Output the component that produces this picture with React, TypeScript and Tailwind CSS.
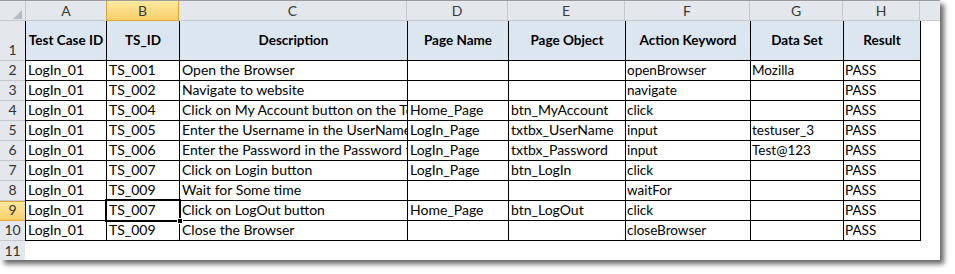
import React from 'react';

// column widths include the right border line
const cols = [
  { key: 'A', w: 'w-[82px]', hw: 'w-[81px]' },
  { key: 'B', w: 'w-[73px]', hw: 'w-[73px]' },
  { key: 'C', w: 'w-[228px]', hw: 'w-[228px]' },
  { key: 'D', w: 'w-[101px]', hw: 'w-[101px]' },
  { key: 'E', w: 'w-[117px]', hw: 'w-[117px]' },
  { key: 'F', w: 'w-[125px]', hw: 'w-[125px]' },
  { key: 'G', w: 'w-[93px]', hw: 'w-[93px]' },
  { key: 'H', w: 'w-[77px]', hw: 'w-[77px]' },
];

const headers = ['Test Case ID', 'TS_ID', 'Description', 'Page Name', 'Page Object', 'Action Keyword', 'Data Set', 'Result'];

const rows: string[][] = [
  ['LogIn_01', 'TS_001', 'Open the Browser', '', '', 'openBrowser', 'Mozilla', 'PASS'],
  ['LogIn_01', 'TS_002', 'Navigate to website', '', '', 'navigate', '', 'PASS'],
  ['LogIn_01', 'TS_004', 'Click on My Account button on the Top of the Homepage', 'Home_Page', 'btn_MyAccount', 'click', '', 'PASS'],
  ['LogIn_01', 'TS_005', 'Enter the Username in the UserName field', 'LogIn_Page', 'txtbx_UserName', 'input', 'testuser_3', 'PASS'],
  ['LogIn_01', 'TS_006', 'Enter the Password in the Password field', 'LogIn_Page', 'txtbx_Password', 'input', 'Test@123', 'PASS'],
  ['LogIn_01', 'TS_007', 'Click on Login button', 'LogIn_Page', 'btn_LogIn', 'click', '', 'PASS'],
  ['LogIn_01', 'TS_009', 'Wait for Some time', '', '', 'waitFor', '', 'PASS'],
  ['LogIn_01', 'TS_007', 'Click on LogOut button', 'Home_Page', 'btn_LogOut', 'click', '', 'PASS'],
  ['LogIn_01', 'TS_009', 'Close the Browser', '', '', 'closeBrowser', '', 'PASS'],
];

const font = "font-['Lato','Liberation_Sans',sans-serif]";

const RowHead: React.FC<{ n: number; h: string; selected?: boolean }> = ({ n, h, selected }) => (
  <div
    className={`w-[25px] ${h} shrink-0 flex items-end justify-center pb-[2px] text-[14px] leading-[16px] text-[#333] border-b ${
      selected ? 'bg-gradient-to-b from-[#fde9a0] to-[#f7cf66] border-[#e0a43c] border-t' : 'bg-[#e4e7eb] border-[#c6cad0]'
    }`}
  >
    {n}
  </div>
);

export default function App() {
  return (
    <div className={`w-[955px] h-[274px] bg-white ${font}`}>
      <div className="relative w-[940px] h-[260px] bg-white shadow-[4px_4px_5px_rgba(0,0,0,0.6)]">
        {/* column letters */}
        <div className="flex h-[21px] border-t border-[#9c9c9c] bg-[#e4e7eb]">
          <div className="relative w-[26px] h-[20px] border-r border-b border-[#c6cad0]">
            <svg className="absolute left-[13px] top-[9px]" width="9" height="9" viewBox="0 0 9 9">
              <polygon points="9,0 9,9 0,9" fill="#b7bcc3" />
            </svg>
          </div>
          {cols.map(c => (
            <div
              key={c.key}
              className={`${c.hw} h-[20px] flex items-center justify-center text-[14px] text-[#3a3a3a] border-b border-r ${
                c.key === 'B'
                  ? 'bg-gradient-to-b from-[#fde9a0] to-[#f7cf66] border-[#e0a43c] border-l -ml-px'
                  : 'border-[#c6cad0]'
              }`}
            >
              {c.key}
            </div>
          ))}
          <div className="flex-1 h-[20px] border-b border-[#c6cad0]" />
        </div>

        {/* row 1 : headers */}
        <div className="flex">
          <RowHead n={1} h="h-[40px]" />
          {cols.map((c, i) => (
            <div
              key={c.key}
              className={`${c.w} h-[40px] flex items-center justify-center bg-[#dce6f1] border-r border-b border-black ${
                i === 0 ? 'border-l' : ''
              } font-bold text-[13.5px] text-black whitespace-nowrap overflow-hidden`}
            >
              {headers[i]}
            </div>
          ))}
        </div>

        {/* data rows */}
        {rows.map((r, ri) => (
          <div key={ri} className="flex">
            <RowHead n={ri + 2} h="h-[20px]" selected={ri + 2 === 9} />
            {cols.map((c, i) => (
              <div
                key={c.key}
                className={`${c.w} h-[20px] flex items-end border-r border-b border-black ${i === 0 ? 'border-l' : ''} ${
                  i >= 5 ? 'pl-[1px] text-[13.5px]' : 'pl-[2px] text-[14px]'
                } pb-[2px] leading-[16px] text-black whitespace-nowrap overflow-hidden`}
              >
                {r[i]}
              </div>
            ))}
          </div>
        ))}

        {/* row 11 */}
        <div className="flex">
          <div className="w-[25px] h-[19px] flex items-end justify-center pb-[1px] text-[14px] leading-[16px] text-[#333] bg-[#e4e7eb]">
            11
          </div>
        </div>

        {/* active cell B9 */}
        <div className="absolute left-[105px] top-[199px] w-[76px] h-[23px] border-2 border-black pointer-events-none" />
        <div className="absolute left-[177px] top-[218px] w-[6px] h-[6px] bg-black border border-white" />
      </div>
    </div>
  );
}
